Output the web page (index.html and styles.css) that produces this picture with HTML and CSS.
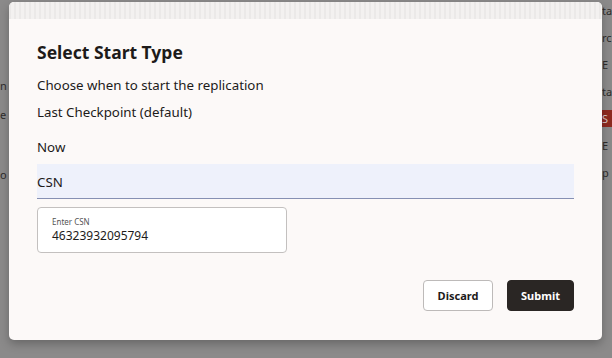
FILE: index.html
```html
<!DOCTYPE html>
<html lang="en">
<head>
    <meta charset="UTF-8">
    <meta name="viewport" content="width=device-width, initial-scale=1.0">
    <title>Select Start Type</title>
    <link rel="stylesheet" href="styles.css">
</head>
<body>

    <div class="backdrop">
        <div class="side side-left">
            <span class="frag" style="margin-top:77px">n</span>
            <span class="frag">e</span>
            <span class="frag" style="margin-top:31px">o</span>
        </div>
        <div class="side side-right">
            <span class="frag">ta</span>
            <span class="frag">rc</span>
            <span class="frag">E</span>
            <span class="frag">ta</span>
            <span class="frag frag-red">S</span>
            <span class="frag">E</span>
            <span class="frag">p</span>
        </div>
    </div>

    <div class="dialog">
        <div class="dialog-strip"></div>
        <div class="dialog-body">
            <h2 class="title">Select Start Type</h2>
            <p class="hint">Choose when to start the replication</p>
            <div class="option">Last Checkpoint (default)</div>
            <div class="option">Now</div>
            <div class="option selected">CSN</div>
            <div class="field">
                <label class="field-label">Enter CSN</label>
                <div class="field-value">46323932095794</div>
            </div>
        </div>
        <div class="dialog-footer">
            <button class="btn btn-outline">Discard</button>
            <button class="btn btn-dark">Submit</button>
        </div>
    </div>

</body>
</html>
```

FILE: styles.css
```css
body { margin: 0; width: 612px; height: 358px; overflow: hidden; background: #8b8a8a; font-family: "Noto Sans", "Open Sans", sans-serif; color: #1d1b1a; position: relative; }

.backdrop { display: flex; justify-content: space-between; height: 358px; }
.side { display: flex; flex-direction: column; }
.side-left { gap: 12px; }
.side-right { width: 10px; padding-top: 2px; gap: 10px; overflow: hidden; }
.frag { font-size: 11px; line-height: 17px; color: #2e2c2b; }
.frag-red { background: #8e2a20; color: #d9c9c6; }

.dialog { position: absolute; left: 9px; top: 2px; width: 593px; height: 338px; background: #fcf9f8; border-radius: 5px; box-shadow: 0 4px 10px rgba(0,0,0,0.25); display: flex; flex-direction: column; overflow: hidden; }
.dialog-strip { height: 17px; background: repeating-linear-gradient(90deg, #ebe9e8 0 2px, #f3f1f0 2px 5px); }
.dialog-body { padding: 22px 28px 0; flex: 1; }

.title { margin: 0 0 13px; font-size: 17.5px; line-height: 22px; font-weight: 700; }
.hint { margin: 0; font-size: 13.3px; line-height: 18px; }
.option { height: 35px; box-sizing: border-box; display: flex; align-items: center; font-size: 13.3px; }
.option.selected { background: #eef1fb; border-bottom: 1px solid #8690b3; padding-top: 1px; }

.field { margin-top: 8px; width: 250px; height: 46px; box-sizing: border-box; border: 1px solid #c3c0bf; border-radius: 4px; background: #fff; padding: 9px 14px 0; }
.field-label { display: block; font-size: 8px; line-height: 10px; color: #555; }
.field-value { font-size: 12px; line-height: 18px; }

.dialog-footer { display: flex; justify-content: flex-end; gap: 14px; padding: 0 28px 29px; }
.btn { height: 31px; padding: 0 12px; border-radius: 4px; font-family: inherit; font-size: 11px; font-weight: 700; cursor: pointer; }
.btn-outline { width: 70px; background: #fff; border: 1px solid #bdbab9; color: #1d1b1a; }
.btn-dark { width: 67px; background: #2a2624; border: 1px solid #2a2624; color: #fff; }
```
